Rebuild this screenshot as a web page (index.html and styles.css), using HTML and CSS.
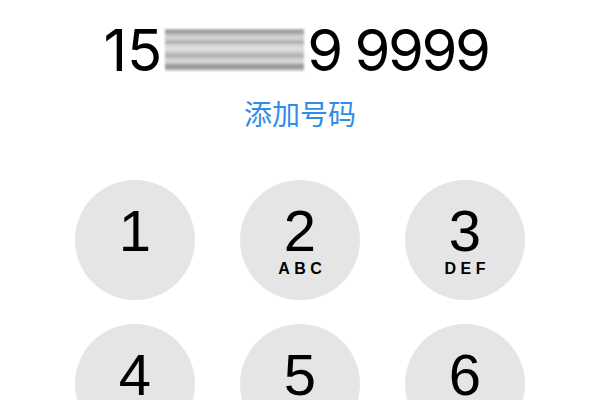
FILE: index.html
```html
<!DOCTYPE html>
<html lang="zh">
<head>
<meta charset="utf-8">
<title>拨号</title>
<link rel="stylesheet" href="styles.css">
</head>
<body>
<div class="screen">
  <div class="number">
    <span class="digits head">15</span><span class="mask"></span><span class="digits tail">9 9999</span>
  </div>
  <div class="add">添加号码</div>
  <div class="keypad">
    <div class="key"><span class="num">1</span></div>
    <div class="key"><span class="num">2</span><span class="letters">ABC</span></div>
    <div class="key"><span class="num">3</span><span class="letters">DEF</span></div>
    <div class="key"><span class="num">4</span></div>
    <div class="key"><span class="num">5</span></div>
    <div class="key"><span class="num">6</span></div>
  </div>
</div>
</body>
</html>
```
FILE: styles.css
```css
html, body {
  margin: 0;
  padding: 0;
  background: #ffffff;
}
body {
  width: 600px;
  height: 400px;
  overflow: hidden;
  font-family: "Liberation Sans", Arial, sans-serif;
  color: #000;
}
.screen {
  display: flex;
  flex-direction: column;
  align-items: center;
}
.number {
  padding-top: 21px;
  padding-right: 8px;
  font-family: Inter, "Liberation Sans", sans-serif;
  font-size: 58px;
  line-height: 58px;
  height: 58px;
  white-space: nowrap;
}
.digits {
  color: #000;
}
.head {
  letter-spacing: 0;
}
.tail {
  letter-spacing: -2.5px;
}
.mask {
  display: inline-block;
  width: 139px;
  height: 42px;
  margin: 0 3px;
  vertical-align: baseline;
  background: linear-gradient(to bottom,
    #b5b5b5 0px, #959595 3px, #bdbdbd 5px, #d6d6d6 8px, #cdcdcd 11px,
    #a5a5a5 13px, #c8c8c8 15px, #e0e0e0 18px, #d9d9d9 22px,
    #bababa 25px, #adadad 27px, #d2d2d2 30px, #dcdcdc 33px,
    #a2a2a2 36px, #8f8f8f 38px, #b5b5b5 40px, #d3d3d3 42px);
  filter: blur(0.8px);
}
.add {
  margin-top: 20px;
  font-family: "Noto Sans CJK SC", "Noto Sans", sans-serif;
  font-size: 28px;
  line-height: 28px;
  color: #2f8ceb;
}
.keypad {
  margin-top: 53px;
  display: grid;
  grid-template-columns: repeat(3, 120px);
  column-gap: 45px;
  row-gap: 24px;
}
.key {
  width: 120px;
  height: 120px;
  border-radius: 50%;
  background: #e5e5e5;
  display: flex;
  flex-direction: column;
  align-items: center;
  box-sizing: border-box;
  padding-top: 22px;
}
.num {
  font-size: 58px;
  line-height: 58px;
  color: #000;
}
.letters {
  margin-top: 1px;
  font-size: 16px;
  line-height: 15px;
  font-weight: 700;
  letter-spacing: 4.5px;
  margin-right: -4.5px;
  color: #000;
}
```
